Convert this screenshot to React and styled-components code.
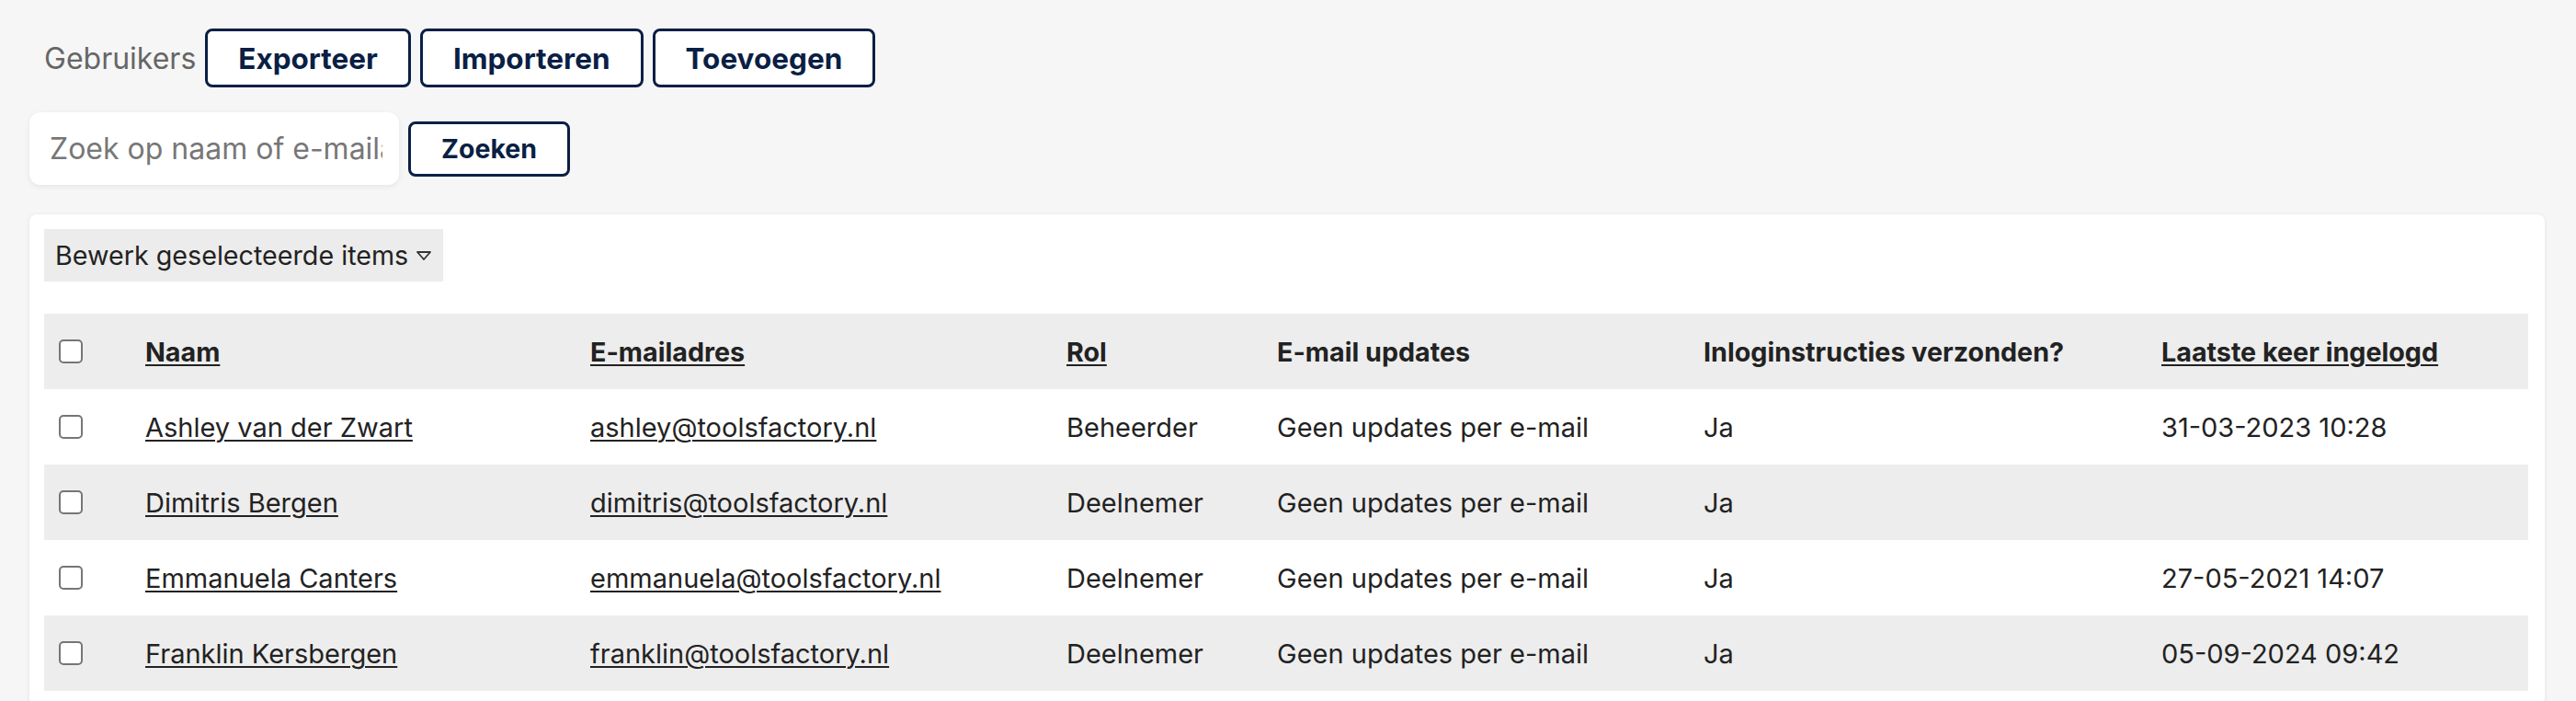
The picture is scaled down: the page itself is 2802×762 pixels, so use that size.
import React from "react";
import styled, { createGlobalStyle } from "styled-components";

const GlobalStyle = createGlobalStyle`
  html, body { margin: 0; padding: 0; background: #f6f6f6; }
  body { font-family: Inter, "Noto Sans", sans-serif; color: #222; }
  * { box-sizing: border-box; }
`;

const Page = styled.div`
  padding: 31px 34px 0 32px;
  display: flex;
  flex-direction: column;
`;

const TopBar = styled.div`
  display: flex;
  align-items: center;
  gap: 10px;
  padding-left: 16px;
`;

const Title = styled.span`
  font-size: 32px;
  color: #666;
  font-weight: 400;
`;

const OutlineButton = styled.button`
  font-family: Inter, "Noto Sans", sans-serif;
  font-weight: 700;
  font-size: ${(p) => (p.$small ? "28.5px" : "31.5px")};
  color: #0a1f45;
  background: #fff;
  border: 3px solid #0a1f45;
  border-radius: 8px;
  height: ${(p) => (p.$small ? "60px" : "64px")};
  padding: 0 33px;
  cursor: pointer;
  display: inline-flex;
  align-items: center;
  justify-content: center;
`;

const SearchRow = styled.div`
  display: flex;
  align-items: center;
  gap: 10px;
  margin-top: 27px;
`;

const SearchInput = styled.input`
  width: 402px;
  height: 79px;
  border: none;
  border-radius: 12px;
  background: #fff;
  box-shadow: 0 2px 6px rgba(0, 0, 0, 0.07);
  padding: 0 18px 0 22px;
  font-family: Inter, "Noto Sans", sans-serif;
  font-size: 32px;
  color: #222;
  outline: none;
  &::placeholder { color: #777; }
`;

const Card = styled.div`
  margin-top: 32px;
  background: #fff;
  border-radius: 8px;
  box-shadow: 0 1px 5px rgba(0, 0, 0, 0.09);
  padding: 16px;
  display: flex;
  flex-direction: column;
  align-items: flex-start;
`;

const BulkButton = styled.button`
  background: #ececec;
  border: none;
  height: 57px;
  padding: 0 12px;
  display: inline-flex;
  align-items: center;
  gap: 8px;
  font-family: Inter, "Noto Sans", sans-serif;
  font-size: 28.7px;
  color: #222;
  cursor: pointer;
`;

const Table = styled.table`
  margin-top: 35px;
  width: 2702px;
  border-collapse: collapse;
  table-layout: fixed;
`;

const Row = styled.tr`
  height: 82px;
  background: ${(p) => (p.$shade ? "#ededed" : "#fff")};
`;

const HeadCell = styled.th`
  text-align: left;
  font-size: 28.7px;
  font-weight: 700;
  color: #222;
  padding: 0 16px;
  vertical-align: middle;
  white-space: nowrap;
`;

const Cell = styled.td`
  font-size: 29px;
  color: #222;
  padding: 0 16px;
  vertical-align: middle;
  white-space: nowrap;
`;

const Link = styled.a`
  color: #222;
  text-decoration: underline;
  text-decoration-thickness: 2px;
  text-underline-offset: 3px;
`;

const Check = styled.input.attrs({ type: "checkbox" })`
  appearance: none;
  margin: 0;
  width: 26px;
  height: 26px;
  border: 2px solid #767676;
  border-radius: 5px;
  background: #fff;
  display: block;
`;

const CheckCell = styled.td`
  padding: 0 16px;
  vertical-align: middle;
`;

const CheckHead = styled.th`
  padding: 0 16px;
  vertical-align: middle;
`;

const Caret = () => (
  <svg width="18" height="12" viewBox="0 0 18 12" aria-hidden="true">
    <path d="M2 2 L16 2 L9 10 Z" fill="none" stroke="#333" strokeWidth="1.8" strokeLinejoin="round" />
  </svg>
);

const users = [
  { name: "Ashley van der Zwart", email: "ashley@toolsfactory.nl", role: "Beheerder", login: "31-03-2023 10:28" },
  { name: "Dimitris Bergen", email: "dimitris@toolsfactory.nl", role: "Deelnemer", login: "" },
  { name: "Emmanuela Canters", email: "emmanuela@toolsfactory.nl", role: "Deelnemer", login: "27-05-2021 14:07" },
  { name: "Franklin Kersbergen", email: "franklin@toolsfactory.nl", role: "Deelnemer", login: "05-09-2024 09:42" },
];

export default function App() {
  return (
    <>
      <GlobalStyle />
      <Page>
        <TopBar>
          <Title>Gebruikers</Title>
          <OutlineButton>Exporteer</OutlineButton>
          <OutlineButton>Importeren</OutlineButton>
          <OutlineButton>Toevoegen</OutlineButton>
        </TopBar>
        <SearchRow>
          <SearchInput placeholder="Zoek op naam of e-mailadres" />
          <OutlineButton $small>Zoeken</OutlineButton>
        </SearchRow>
        <Card>
          <BulkButton>
            Bewerk geselecteerde items <Caret />
          </BulkButton>
          <Table>
            <colgroup>
              <col style={{ width: 94 }} />
              <col style={{ width: 484 }} />
              <col style={{ width: 518 }} />
              <col style={{ width: 229 }} />
              <col style={{ width: 464 }} />
              <col style={{ width: 498 }} />
              <col style={{ width: 415 }} />
            </colgroup>
            <thead>
              <Row $shade>
                <CheckHead><Check /></CheckHead>
                <HeadCell><Link>Naam</Link></HeadCell>
                <HeadCell><Link>E-mailadres</Link></HeadCell>
                <HeadCell><Link>Rol</Link></HeadCell>
                <HeadCell>E-mail updates</HeadCell>
                <HeadCell>Inloginstructies verzonden?</HeadCell>
                <HeadCell><Link>Laatste keer ingelogd</Link></HeadCell>
              </Row>
            </thead>
            <tbody>
              {users.map((u, i) => (
                <Row key={u.email} $shade={i % 2 === 1}>
                  <CheckCell><Check /></CheckCell>
                  <Cell><Link>{u.name}</Link></Cell>
                  <Cell><Link>{u.email}</Link></Cell>
                  <Cell>{u.role}</Cell>
                  <Cell>Geen updates per e-mail</Cell>
                  <Cell>Ja</Cell>
                  <Cell>{u.login}</Cell>
                </Row>
              ))}
            </tbody>
          </Table>
        </Card>
      </Page>
    </>
  );
}
